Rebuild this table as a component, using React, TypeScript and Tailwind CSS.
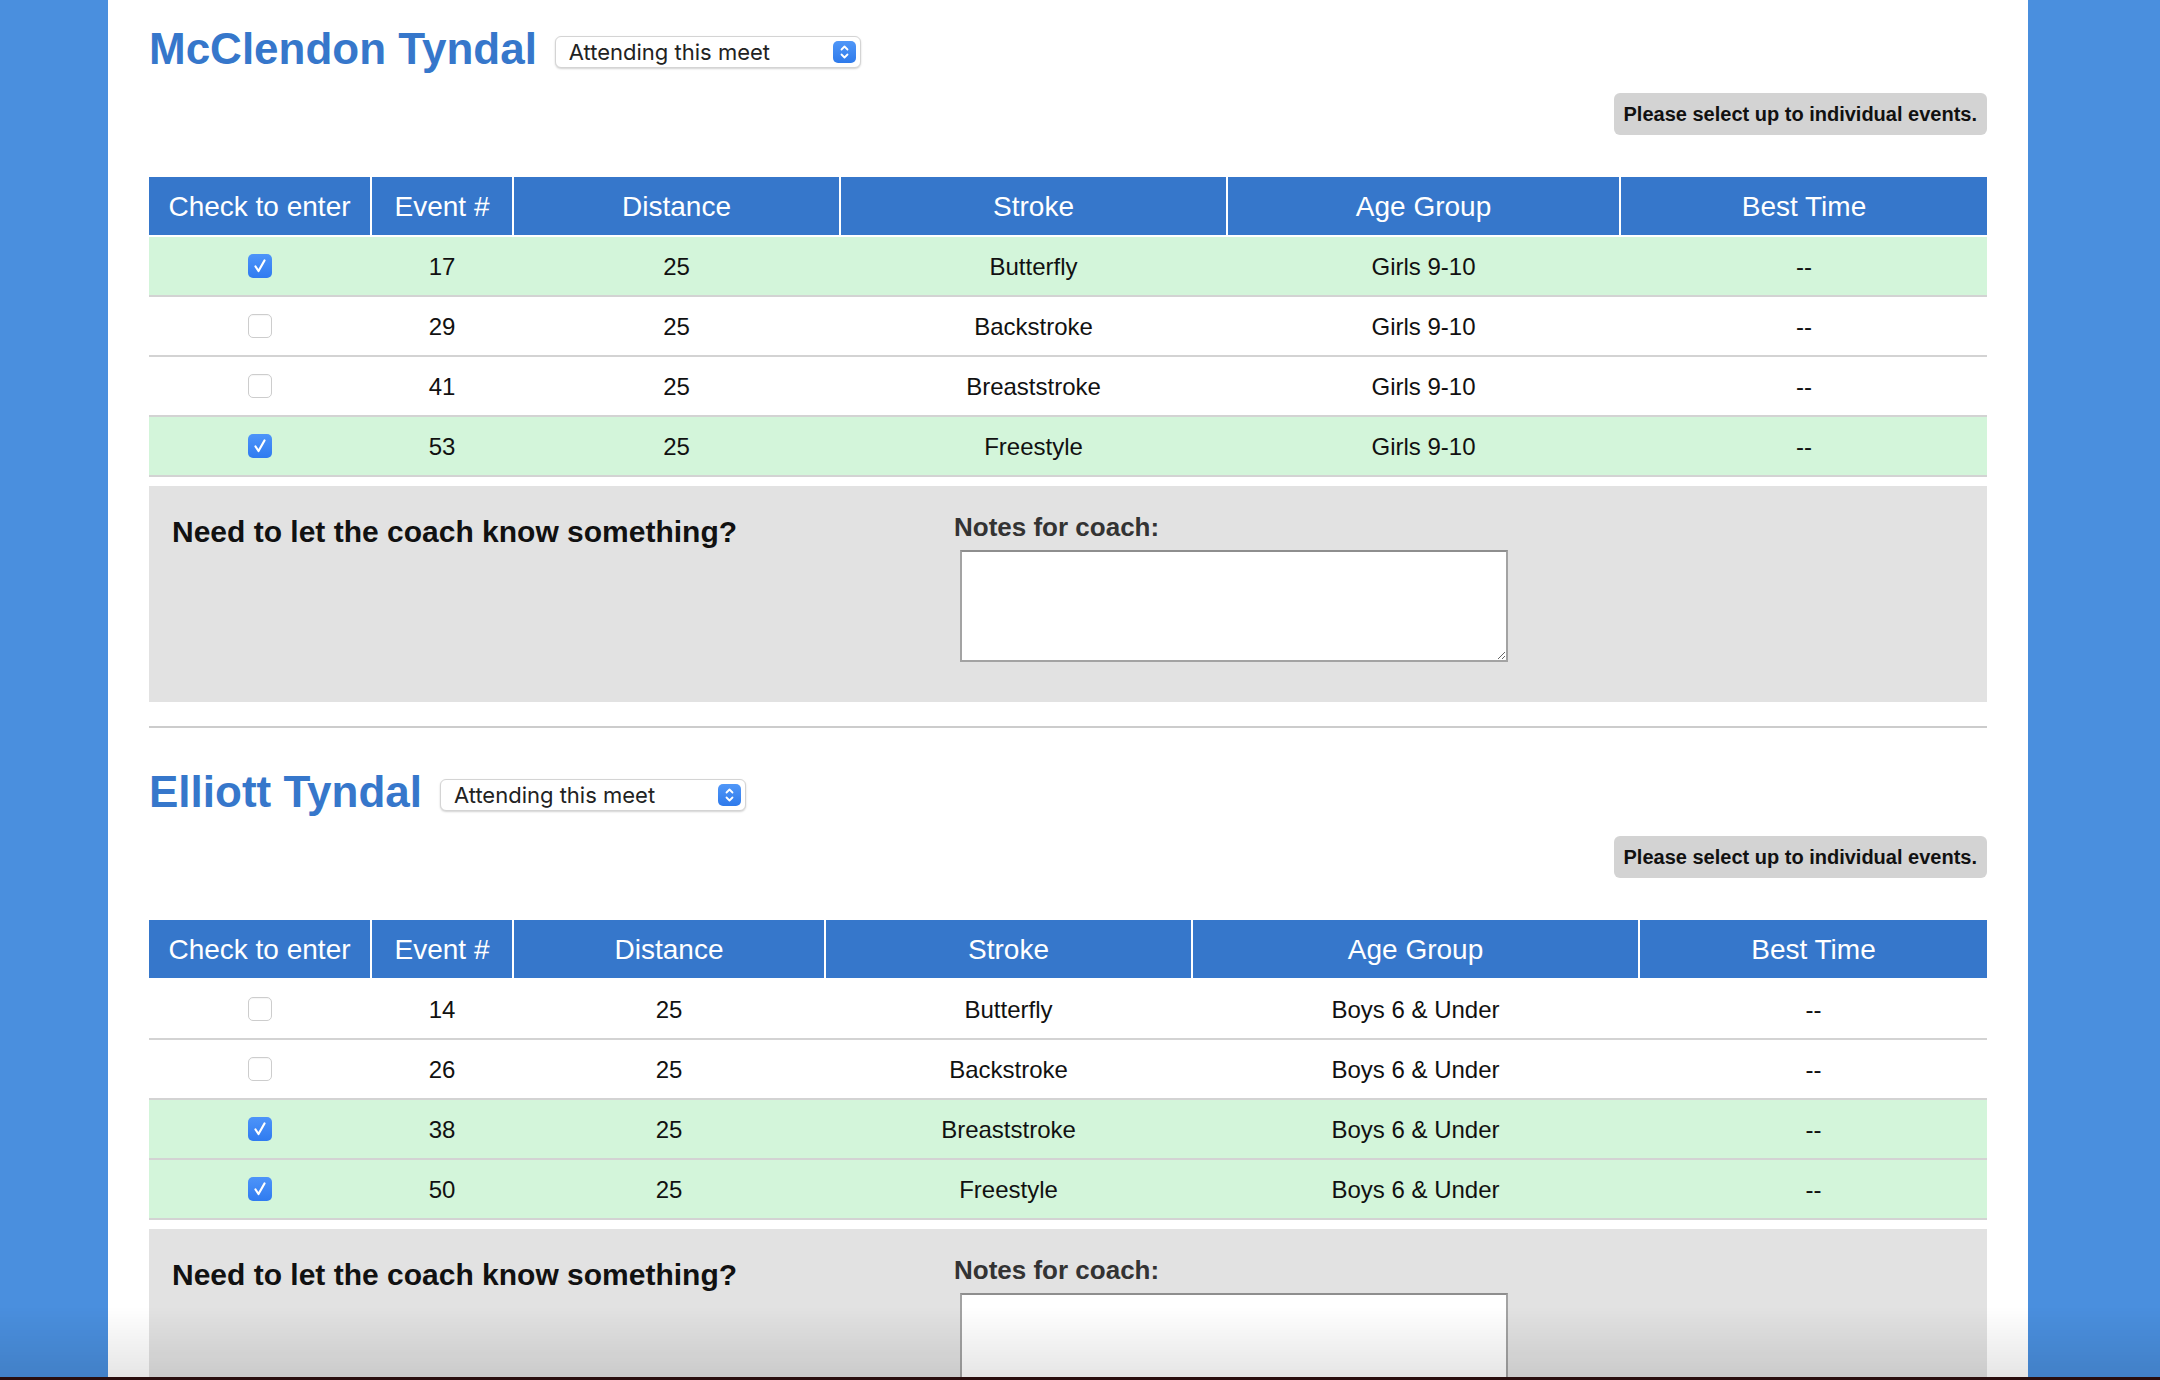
import React from "react";

type Row = { checked: boolean; ev: number; dist: number; stroke: string; age: string; best: string };

const table1: Row[] = [
  { checked: true, ev: 17, dist: 25, stroke: "Butterfly", age: "Girls 9-10", best: "--" },
  { checked: false, ev: 29, dist: 25, stroke: "Backstroke", age: "Girls 9-10", best: "--" },
  { checked: false, ev: 41, dist: 25, stroke: "Breaststroke", age: "Girls 9-10", best: "--" },
  { checked: true, ev: 53, dist: 25, stroke: "Freestyle", age: "Girls 9-10", best: "--" },
];

const table2: Row[] = [
  { checked: false, ev: 14, dist: 25, stroke: "Butterfly", age: "Boys 6 & Under", best: "--" },
  { checked: false, ev: 26, dist: 25, stroke: "Backstroke", age: "Boys 6 & Under", best: "--" },
  { checked: true, ev: 38, dist: 25, stroke: "Breaststroke", age: "Boys 6 & Under", best: "--" },
  { checked: true, ev: 50, dist: 25, stroke: "Freestyle", age: "Boys 6 & Under", best: "--" },
];

function CheckBox({ checked }: { checked: boolean }) {
  if (checked) {
    return (
      <div className="w-[24px] h-[24px] rounded-[5px] bg-gradient-to-b from-[#4d94f9] to-[#2f7bf0] flex items-center justify-center">
        <svg width="24" height="24" viewBox="0 0 24 24">
          <path d="M7.5 12.5 L10.5 17 L16.5 6.5" fill="none" stroke="white" strokeWidth="2.2" strokeLinecap="round" strokeLinejoin="round" />
        </svg>
      </div>
    );
  }
  return <div className="w-[24px] h-[24px] rounded-[5px] bg-white border border-[#cdcdcd] shadow-[inset_0_1px_1px_rgba(0,0,0,0.04)]" />;
}

function Select() {
  return (
    <div className="mt-[12px] ml-[18px] w-[306px] h-[32px] rounded-[6px] bg-white border border-[#d4d4d4] shadow-[0_1px_2px_rgba(0,0,0,0.18)] flex items-center justify-between pl-[13px] pr-[4px]">
      <span className="font-['Inter',sans-serif] text-[22px] text-[#222] leading-none">Attending this meet</span>
      <div className="w-[23px] h-[22px] rounded-[5px] bg-gradient-to-b from-[#5097f8] to-[#2e7aeb] flex items-center justify-center">
        <svg width="23" height="22" viewBox="0 0 23 22">
          <path d="M8.5 8.5 L11.5 5.5 L14.5 8.5" fill="none" stroke="white" strokeWidth="1.8" strokeLinecap="round" strokeLinejoin="round" />
          <path d="M8.5 13.5 L11.5 16.5 L14.5 13.5" fill="none" stroke="white" strokeWidth="1.8" strokeLinecap="round" strokeLinejoin="round" />
        </svg>
      </div>
    </div>
  );
}

function Section({ name, rows, cols }: { name: string; rows: Row[]; cols: string }) {
  const headers = ["Check to enter", "Event #", "Distance", "Stroke", "Age Group", "Best Time"];
  return (
    <div className="pt-[24px]">
      <div className="flex items-start">
        <h2 className="text-[44px] leading-[50px] font-bold text-[#3677cb]">{name}</h2>
        <Select />
      </div>
      <div className="flex justify-end mt-[19px]">
        <div className="h-[42px] px-[10px] rounded-[6px] bg-[#d3d3d3] flex items-center text-[20px] font-bold text-[#111]">
          Please select up to individual events.
        </div>
      </div>
      <div className="mt-[42px]">
        <div className={`grid ${cols} gap-x-[2px] mb-[2px]`}>
          {headers.map((h) => (
            <div key={h} className="h-[58px] pt-[2px] bg-[#3677cb] text-white text-[28px] flex items-center justify-center">
              {h}
            </div>
          ))}
        </div>
        {rows.map((r) => (
          <div
            key={r.ev}
            className={`grid ${cols} gap-x-[2px] h-[60px] border-b-2 border-[#d3d3d3] text-[24px] text-[#111] ${r.checked ? "bg-[#d3f5da]" : "bg-white"}`}
          >
            <div className="flex items-center justify-center">
              <CheckBox checked={r.checked} />
            </div>
            <div className="flex items-center justify-center pt-[1px]">{r.ev}</div>
            <div className="flex items-center justify-center pt-[1px]">{r.dist}</div>
            <div className="flex items-center justify-center pt-[1px]">{r.stroke}</div>
            <div className="flex items-center justify-center pt-[1px]">{r.age}</div>
            <div className="flex items-center justify-center pt-[1px]">{r.best}</div>
          </div>
        ))}
      </div>
      <div className="mt-[9px] h-[216px] bg-[#e2e2e2] flex pl-[23px]">
        <div className="w-[782px] pt-[28px]">
          <div className="text-[30px] font-bold text-[#111] leading-[35px]">Need to let the coach know something?</div>
        </div>
        <div className="pt-[26px]">
          <div className="text-[26px] font-bold text-[#333] leading-[30px]">Notes for coach:</div>
          <textarea className="block mt-[8px] ml-[6px] w-[548px] h-[112px] bg-white border-2 border-[#a3a3a3] border-t-[#8e8e8e] outline-none resize" />
        </div>
      </div>
      <div className="mt-[24px] mb-[15px] h-[2px] bg-[#cccccc]" />
    </div>
  );
}

export default function App() {
  return (
    <div className="min-h-screen bg-[#4a8fde] font-['Liberation_Sans',Arial,Helvetica,sans-serif]">
      <div className="ml-[108px] w-[1920px] min-h-screen bg-white px-[41px]">
        <Section name="McClendon Tyndal" rows={table1} cols="grid-cols-[221px_140px_325px_385px_391px_366px]" />
        <Section name="Elliott Tyndal" rows={table2} cols="grid-cols-[221px_140px_310px_365px_445px_347px]" />
      </div>
      <div className="fixed left-0 right-0 bottom-[3px] h-[70px] bg-gradient-to-b from-transparent to-black/10 pointer-events-none" />
      <div className="fixed left-0 right-0 bottom-0 h-[3px] bg-[#2a0e0e]" />
    </div>
  );
}
